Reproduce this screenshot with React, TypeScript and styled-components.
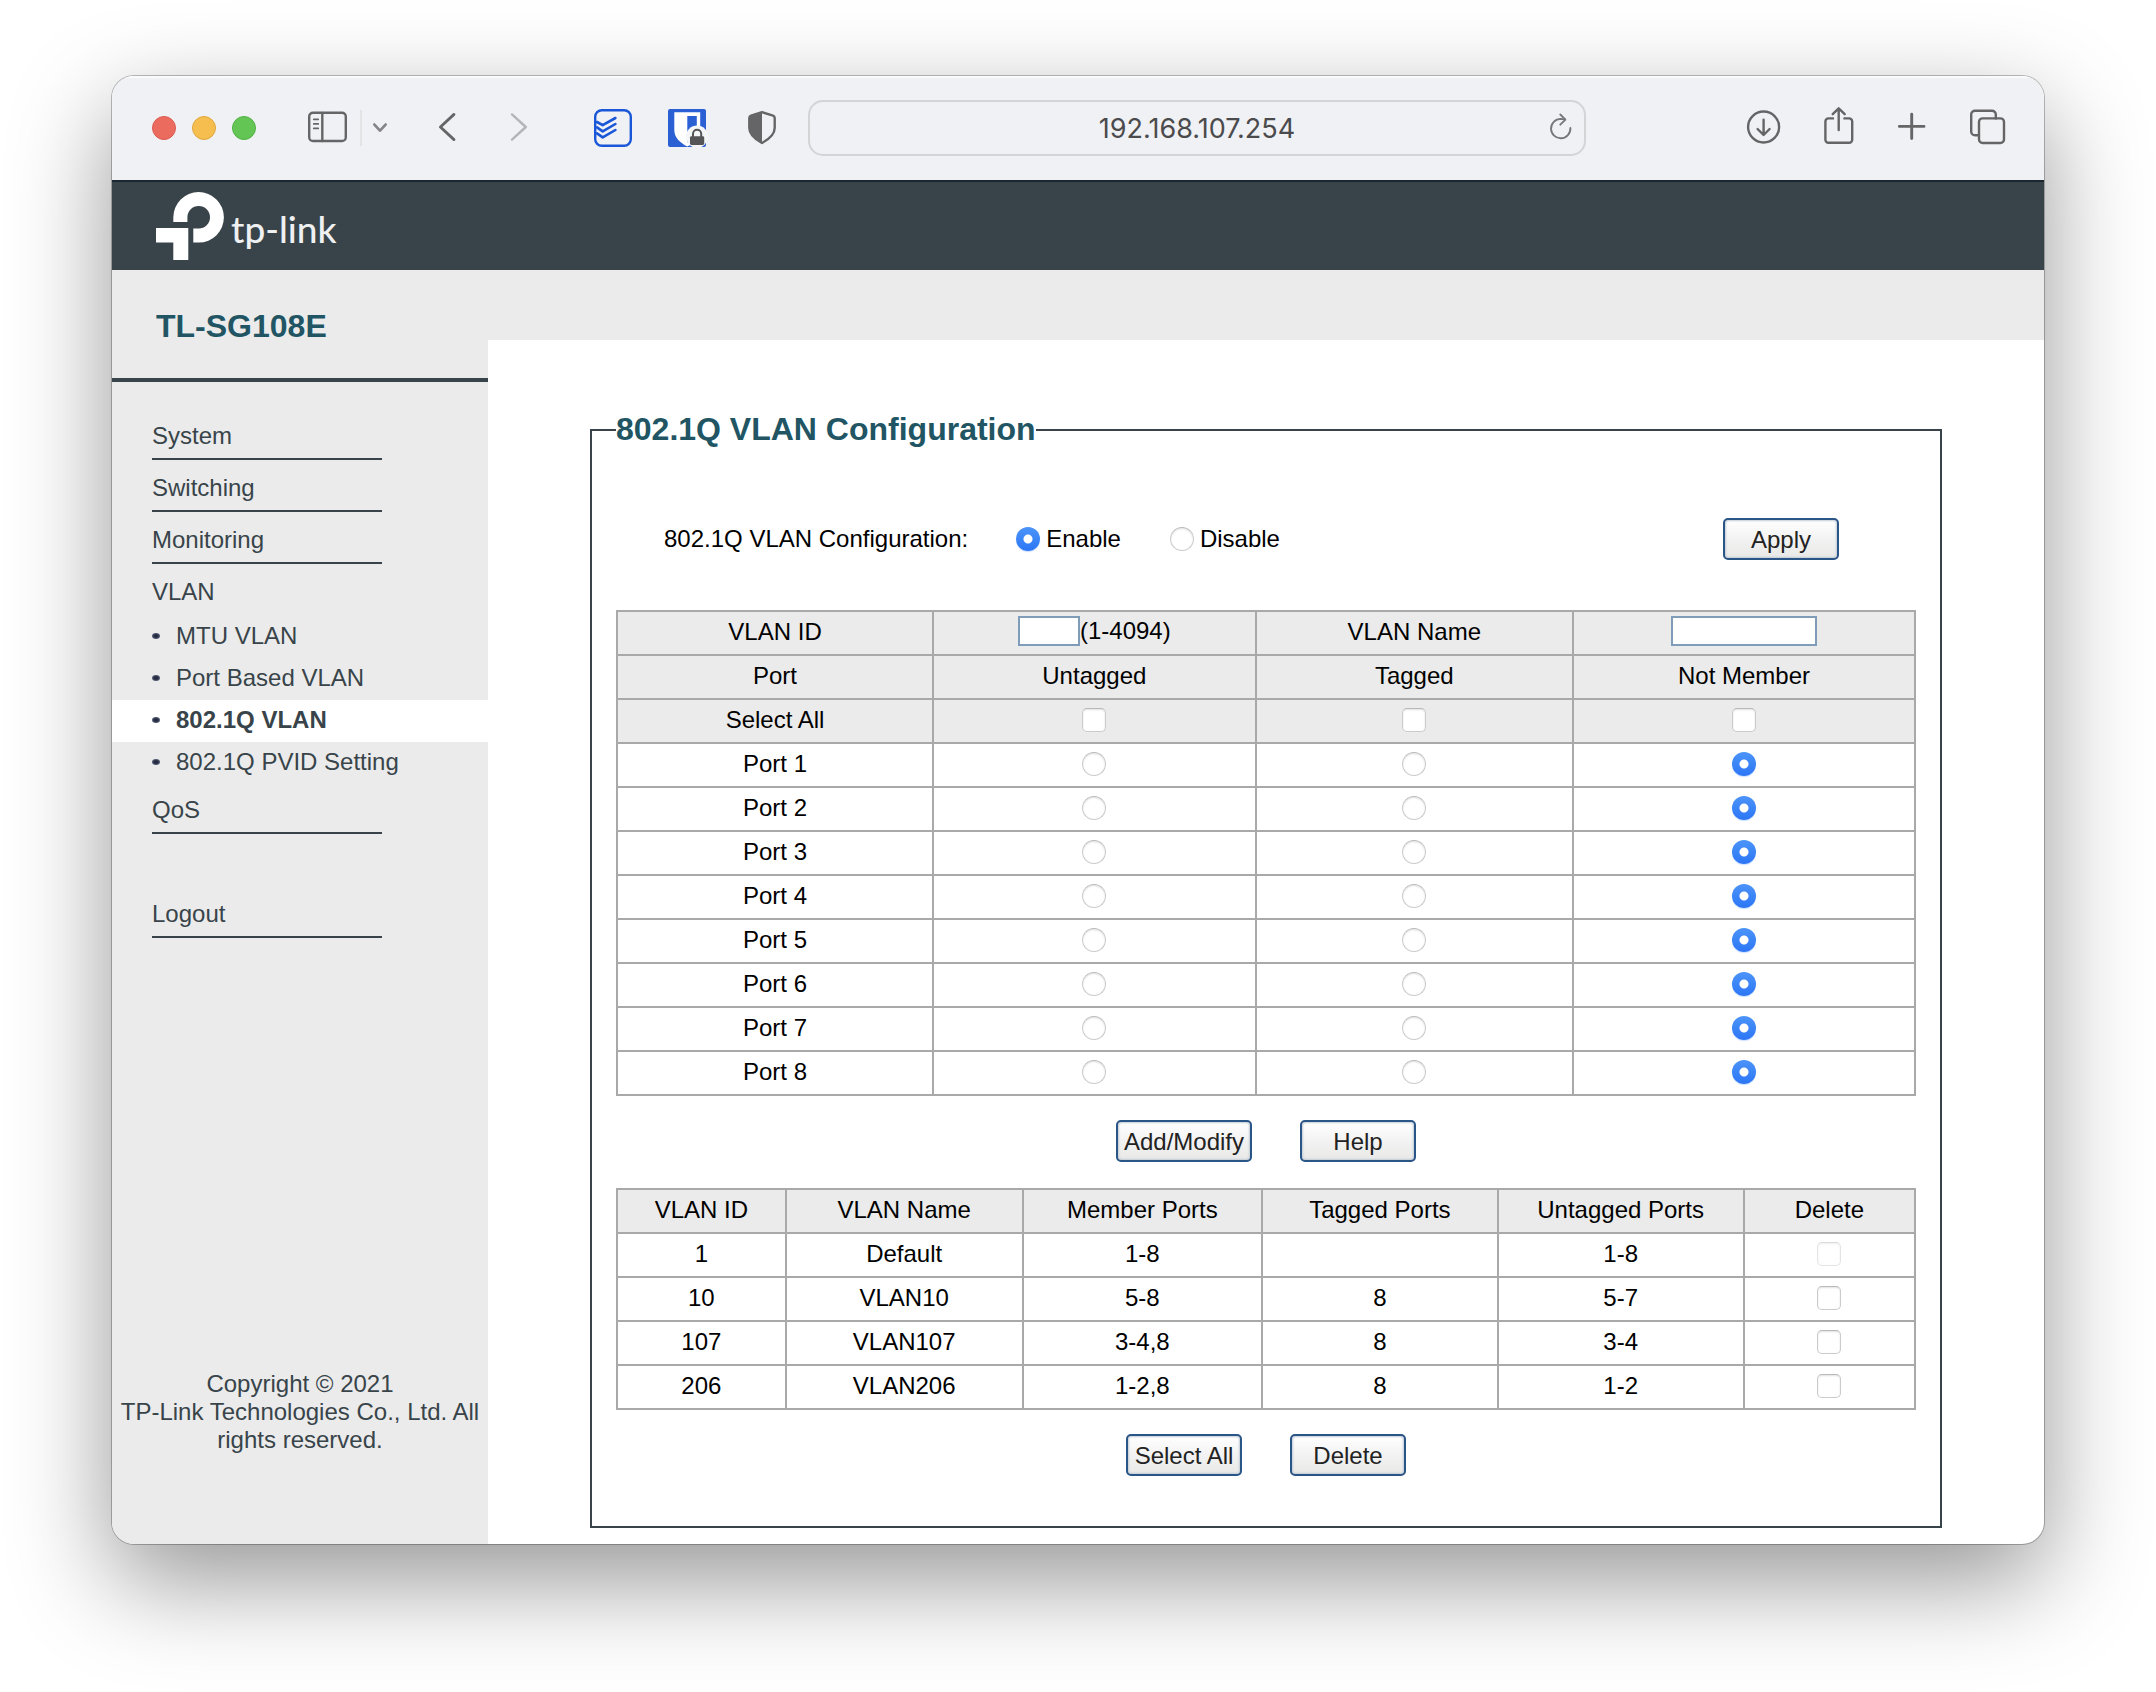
import React, { useState } from "react";
import styled, { createGlobalStyle, css } from "styled-components";

const SANS = '"Liberation Sans", Arial, Helvetica, sans-serif';
const SLATE = "#38444a";
const TEAL = "#215563";
const PALE = "#ebebeb";
const ICON = "#656567";

const GlobalStyle = createGlobalStyle`
  *, *::before, *::after { box-sizing: border-box; }
  body { margin: 0; background: #fff; font: 24px/28px ${SANS}; color: #000; }
`;

const Desktop = styled.div`
  padding: 76px 112px 148px;
`;

const BrowserWindow = styled.div`
  display: flex;
  flex-direction: column;
  border-radius: 22px;
  overflow: hidden;
  background: #fff;
  box-shadow: 0 0 0 1px rgba(0, 0, 0, 0.25), 0 36px 100px rgba(0, 0, 0, 0.42);
`;

/* ---------- browser toolbar ---------- */

const Toolbar = styled.div`
  display: flex;
  align-items: center;
  height: 104px;
  padding: 0 38px 0 40px;
  background: #f0f1f4;
  box-shadow: inset 0 2px 1px #fafbfc;
`;

const Group = styled.div<{ $gap?: number; $after?: number }>`
  display: flex;
  align-items: center;
  gap: ${(p) => p.$gap ?? 0}px;
  margin-right: ${(p) => p.$after ?? 0}px;
`;

const Light = styled.button<{ $fill: string; $edge: string }>`
  width: 24px;
  height: 24px;
  padding: 0;
  border: 1px solid ${(p) => p.$edge};
  border-radius: 50%;
  background: ${(p) => p.$fill};
`;

const IconButton = styled.button`
  display: flex;
  padding: 0;
  border: 0;
  background: none;
  svg {
    display: block;
    height: 40px;
    overflow: visible;
    fill: none;
    stroke: ${ICON};
    stroke-width: 2.4;
    stroke-linecap: round;
    stroke-linejoin: round;
  }
`;

const Separator = styled.span`
  width: 2px;
  height: 36px;
  margin: 0 10px 0 12px;
  background: #e3e4e6;
`;

const AddressBar = styled.div`
  display: flex;
  flex: 1;
  align-items: center;
  height: 56px;
  margin-right: 160px;
  padding: 0 12px 0 34px;
  border: 2px solid #d3d4d6;
  border-radius: 15px;
`;

const AddressInput = styled.input`
  flex: 1;
  min-width: 0;
  padding: 2px 0 0;
  border: 0;
  outline: 0;
  background: none;
  color: #4b4b4d;
  font: 27px/32px Inter, "Noto Sans", sans-serif;
  text-align: center;
`;

/* ---------- switch admin page ---------- */

const Banner = styled.header`
  display: flex;
  height: 90px;
  padding: 10px 44px;
  border-top: 2px solid #1b2730;
  background: ${SLATE};
`;

const Logo = styled.a`
  display: flex;
  gap: 7px;
  color: #eff0f1;
  text-decoration: none;
`;

const Wordmark = styled.span`
  padding-top: 15px;
  font: 500 37px/44px Lato, sans-serif;
`;

const Body = styled.div`
  display: flex;
`;

const Sidebar = styled.aside`
  display: flex;
  flex: none;
  flex-direction: column;
  width: 376px;
  background: ${PALE};
  color: ${SLATE};
`;

const Model = styled.h1`
  height: 112px;
  margin: 0;
  padding: 37px 44px 0;
  border-bottom: 4px solid ${SLATE};
  color: ${TEAL};
  font: bold 32px/38px ${SANS};
`;

const Menu = styled.ul`
  margin: 26px 0 0;
  padding: 0;
  list-style: none;
`;

const MenuEntry = styled.li<{ $before?: number }>`
  margin-top: ${(p) => p.$before ?? 0}px;
`;

const MenuLink = styled.a<{ $line?: boolean }>`
  display: block;
  width: 230px;
  height: 52px;
  margin-left: 40px;
  padding-top: 14px;
  border-bottom: ${(p) => (p.$line ? `2px solid ${SLATE}` : "0")};
  color: inherit;
  text-decoration: none;
`;

const SubMenu = styled.ul`
  margin: 0 0 -2px;
  padding: 0;
  list-style: none;
`;

const SubLink = styled.a<{ $active?: boolean }>`
  display: flex;
  align-items: center;
  gap: 16px;
  height: 42px;
  padding: 0 0 2px 40px;
  color: inherit;
  text-decoration: none;
  ${(p) => p.$active && css`
    background: #fff;
    font-weight: bold;
  `}
  &::before {
    content: "";
    width: 8px;
    height: 6px;
    border-radius: 50%;
    background: radial-gradient(#252c40 30%, #7f86a8 100%);
  }
`;

const Copyright = styled.p`
  margin: auto 0 0;
  padding: 0 6px 90px;
  text-align: center;
`;

const Main = styled.main`
  flex: 1;
  min-width: 0;
`;

const TopStrip = styled.div`
  height: 70px;
  background: ${PALE};
`;

const Panel = styled.fieldset`
  min-width: 0;
  margin: 72px 102px 16px;
  padding: 70px 24px 50px;
  border: 2px solid ${SLATE};
`;

const PanelTitle = styled.legend`
  padding: 0 0 2px;
  color: ${TEAL};
  font: bold 32px/34px ${SANS};
`;

const ModeRow = styled.div`
  display: flex;
  align-items: center;
  margin-bottom: 50px;
  padding: 0 77px 0 48px;
`;

const ModeCaption = styled.span`
  margin-right: 48px;
`;

const ModeOption = styled.label`
  display: flex;
  align-items: center;
  gap: 6px;
  margin-right: 49px;
`;

const tick = css`
  display: block;
  flex: none;
  width: 24px;
  height: 24px;
  margin: 0;
  appearance: none;
  border: 1px solid #cbcbcb;
  border-top-color: #b9b9b9;
  background: #fff;
  box-shadow: inset 0 1px 2px rgba(0, 0, 0, 0.12);
`;

const Radio = styled.input.attrs({ type: "radio" })`
  ${tick}
  border-radius: 50%;
  &:checked {
    border: 0;
    background: radial-gradient(circle, #fff 4px, transparent 5px), linear-gradient(#4c94f8, #2c76f6);
    box-shadow: 0 1px 1px rgba(44, 118, 246, 0.25);
  }
`;

const Check = styled.input.attrs({ type: "checkbox" })`
  ${tick}
  border-radius: 5px;
  &:checked {
    background: linear-gradient(#4c94f8, #2c76f6);
  }
  &:disabled {
    opacity: 0.5;
  }
`;

const PushButton = styled.button`
  min-width: 116px;
  height: 42px;
  padding: 2px 6px 0;
  border: 2px solid #2a5587;
  border-radius: 5px;
  background: linear-gradient(#fff, #f0f0f0 60%, #e9e9e7);
  box-shadow: inset 0 0 2px 1px #c3ccd6;
  color: #222;
  font: 24px/28px ${SANS};
`;

const ApplyButton = styled(PushButton)`
  margin-left: auto;
`;

const Actions = styled.div<{ $after?: number }>`
  display: flex;
  justify-content: center;
  gap: 48px;
  margin: 24px 0 ${(p) => p.$after ?? 0}px;
`;

const Grid = styled.table`
  width: 100%;
  table-layout: fixed;
  border-collapse: collapse;
  text-align: center;
`;

const Column = styled.col<{ $share: number }>`
  width: ${(p) => p.$share}%;
`;

const Row = styled.tr<{ $shaded?: boolean }>`
  height: 44px;
  background: ${(p) => (p.$shaded ? PALE : "#fff")};
  th, td {
    padding: 0 0 2px;
    border: 2px solid #a9a9a9;
    font-weight: normal;
    vertical-align: middle;
  }
  ${Radio}, ${Check} {
    margin: 0 auto;
  }
`;

const Field = styled.input<{ $width: number }>`
  display: block;
  width: ${(p) => p.$width}px;
  height: 30px;
  padding: 0 4px;
  border: 2px solid #7f9db9;
  background: #fff;
  font: 24px/26px ${SANS};
`;

const FieldWrap = styled.div`
  display: flex;
  align-items: center;
  justify-content: center;
  height: 30px;
  margin-bottom: 2px;
`;

/* ---------- icons ---------- */

const SidebarIcon = () => (
  <svg width="40" viewBox="0 0 40 40">
    <rect x="1.2" y="4.8" width="36.6" height="28.2" rx="3.8" />
    <path d="M14.3 5v28" />
    <path d="M5.8 11.3h4.4M5.8 15.9h4.4M5.8 20.4h4.4" strokeWidth="1.8" />
  </svg>
);

const DropIcon = () => (
  <svg width="16" viewBox="0 0 16 40" style={{ stroke: "#85858a", strokeWidth: 2.8 }}>
    <path d="M2.4 16.6L8 22.6L13.6 16.6" />
  </svg>
);

const BackIcon = () => (
  <svg width="18" viewBox="0 0 18 40">
    <path d="M16 6.4L2.4 19L16 31.6" strokeWidth="2.8" />
  </svg>
);

const ForwardIcon = () => (
  <svg width="18" viewBox="0 0 18 40" style={{ stroke: "#b4b5b8" }}>
    <path d="M2 6.4L15.8 19L2 31.6" />
  </svg>
);

const TodoistIcon = () => (
  <svg width="38" viewBox="0 0 38 40" style={{ stroke: "#1a57d8" }}>
    <rect x="1.2" y="2.2" width="35.6" height="35.6" rx="6.6" />
    <path d="M3 14L8.7 17.2L21.4 10M3 19.4L8.7 23.4L21.4 16M3 25.4L8.7 29.4L21.4 22" strokeWidth="2.6" />
  </svg>
);

const BitwardenIcon = () => (
  <svg width="38" viewBox="0 0 38 40" style={{ stroke: "none" }}>
    <rect y="1" width="38" height="38" rx="2" fill="#2b5fd4" />
    <path d="M6.3 4.2H32.2V22C32.2 30 26 35 19.3 38.6C12.5 35 6.3 30 6.3 22Z" fill="#fff" />
    <path d="M19.3 8H28.8V22C28.8 27 24 31.5 19.3 34.5Z" fill="#2b5fd4" />
    <circle cx="29" cy="28.6" r="11" fill="#f4f5f7" />
    <rect x="22" y="28.2" width="14.2" height="8.8" rx="1.4" fill="#555557" />
    <path d="M25 28.5V25.8A4.1 4.1 0 0 1 33.2 25.8V28.5" fill="none" stroke="#555557" strokeWidth="2" />
  </svg>
);

const ShieldIcon = () => (
  <svg width="28" viewBox="0 0 28 40">
    <path d="M14 4.2L25 7.6Q26.7 8.2 26.7 10V20C26.7 27 20.5 31.5 14 35C7.5 31.5 1.3 27 1.3 20V10Q1.3 8.2 3 7.6Z" />
    <path d="M14 4.2L3 7.6Q1.3 8.2 1.3 10V20C1.3 27 7.5 31.5 14 35Z" fill={ICON} stroke="none" />
  </svg>
);

const ReloadIcon = () => (
  <svg width="22" viewBox="0 0 22 40" style={{ stroke: "#78787b", strokeWidth: 1.9 }}>
    <path d="M20.4 20A9.7 9.7 0 1 1 10.7 10.9L15 11.4" />
    <path d="M10.3 6.5L15.4 11.6L10.3 16.7" />
  </svg>
);

const DownloadIcon = () => (
  <svg width="34" viewBox="0 0 34 40">
    <circle cx="17.6" cy="19" r="15.5" />
    <path d="M17.6 11.8V26.6M11.6 21L17.6 27L23.6 21" />
  </svg>
);

const ShareIcon = () => (
  <svg width="32" viewBox="0 0 32 40">
    <path d="M11 10.4H6.4A3 3 0 0 0 3.4 13.4V31.8A3 3 0 0 0 6.4 34.8H27.2A3 3 0 0 0 30.2 31.8V13.4A3 3 0 0 0 27.2 10.4H22.4" />
    <path d="M16.7 22V0.6M10.7 6.2L16.7 0.3L22.7 6.2" />
  </svg>
);

const PlusIcon = () => (
  <svg width="30" viewBox="0 0 30 40">
    <path d="M15.7 6.2V30.6M3.4 18.4H28" strokeWidth="2.9" />
  </svg>
);

const TabsIcon = () => (
  <svg width="38" viewBox="0 0 38 40">
    <rect x="11" y="10.4" width="25" height="24.6" rx="3.6" />
    <path d="M11 27.2H7A3.8 3.8 0 0 1 3.2 23.4V6.6A3.8 3.8 0 0 1 7 2.8H24A3.8 3.8 0 0 1 27.8 6.6V10.4" />
  </svg>
);

const LogoMark = () => (
  <svg width="68" height="68" viewBox="0 0 68 68" fill="#fff">
    <path d="M17.3 30V25.3A25.3 25.3 0 1 1 42.7 50.6H37.3V36.6H42.7A11.3 11.3 0 1 0 31.4 25.3V30Z" />
    <path d="M0 36H32.3V68H17.3V50.6H0Z" />
  </svg>
);

/* ---------- data ---------- */

const PORTS = [1, 2, 3, 4, 5, 6, 7, 8];
const MEMBERSHIPS = ["Untagged", "Tagged", "Not Member"];
const VLANS = [
  { id: "1", name: "Default", members: "1-8", tagged: "", untagged: "1-8", locked: true },
  { id: "10", name: "VLAN10", members: "5-8", tagged: "8", untagged: "5-7", locked: false },
  { id: "107", name: "VLAN107", members: "3-4,8", tagged: "8", untagged: "3-4", locked: false },
  { id: "206", name: "VLAN206", members: "1-2,8", tagged: "8", untagged: "1-2", locked: false },
];
const VLAN_PAGES = ["MTU VLAN", "Port Based VLAN", "802.1Q VLAN", "802.1Q PVID Setting"];

const BrowserToolbar = () => (
  <Toolbar>
    <Group $gap={16} $after={52}>
      <Light aria-label="Close" $fill="#ec6b5f" $edge="#dc5b50" />
      <Light aria-label="Minimize" $fill="#f5be4f" $edge="#dfa840" />
      <Light aria-label="Zoom" $fill="#62c554" $edge="#53b146" />
    </Group>
    <Group $after={50}>
      <IconButton aria-label="Show sidebar"><SidebarIcon /></IconButton>
      <Separator />
      <IconButton aria-label="Tab groups"><DropIcon /></IconButton>
    </Group>
    <Group $gap={54} $after={66}>
      <IconButton aria-label="Back"><BackIcon /></IconButton>
      <IconButton aria-label="Forward"><ForwardIcon /></IconButton>
    </Group>
    <Group $gap={36} $after={42}>
      <IconButton aria-label="Todoist"><TodoistIcon /></IconButton>
      <IconButton aria-label="Bitwarden"><BitwardenIcon /></IconButton>
    </Group>
    <Group $after={32}>
      <IconButton aria-label="Privacy report"><ShieldIcon /></IconButton>
    </Group>
    <AddressBar>
      <AddressInput aria-label="Address" defaultValue="192.168.107.254" />
      <IconButton aria-label="Reload"><ReloadIcon /></IconButton>
    </AddressBar>
    <Group $gap={42}>
      <IconButton aria-label="Downloads"><DownloadIcon /></IconButton>
      <IconButton aria-label="Share"><ShareIcon /></IconButton>
      <IconButton aria-label="New tab"><PlusIcon /></IconButton>
      <IconButton aria-label="Tab overview"><TabsIcon /></IconButton>
    </Group>
  </Toolbar>
);

const Navigation = () => (
  <Sidebar>
    <Model>TL-SG108E</Model>
    <nav>
      <Menu>
        {["System", "Switching", "Monitoring"].map((name) => (
          <MenuEntry key={name}><MenuLink href="#" $line>{name}</MenuLink></MenuEntry>
        ))}
        <MenuEntry>
          <MenuLink href="#">VLAN</MenuLink>
          <SubMenu>
            {VLAN_PAGES.map((name) => (
              <li key={name}><SubLink href="#" $active={name === "802.1Q VLAN"}>{name}</SubLink></li>
            ))}
          </SubMenu>
        </MenuEntry>
        <MenuEntry><MenuLink href="#" $line>QoS</MenuLink></MenuEntry>
        <MenuEntry $before={52}><MenuLink href="#" $line>Logout</MenuLink></MenuEntry>
      </Menu>
    </nav>
    <Copyright>
      Copyright © 2021<br />TP-Link Technologies Co., Ltd. All rights reserved.
    </Copyright>
  </Sidebar>
);

const PortTable = () => {
  const [choice, setChoice] = useState<Record<number, string>>({});
  return (
    <Grid>
      <colgroup>
        <Column $share={24.35} />
        <Column $share={24.85} />
        <Column $share={24.45} />
        <Column $share={26.35} />
      </colgroup>
      <tbody>
        <Row $shaded>
          <th><label htmlFor="vlan-id">VLAN ID</label></th>
          <td><FieldWrap><Field id="vlan-id" $width={62} />(1-4094)</FieldWrap></td>
          <th><label htmlFor="vlan-name">VLAN Name</label></th>
          <td><FieldWrap><Field id="vlan-name" $width={146} /></FieldWrap></td>
        </Row>
        <Row $shaded>
          <th>Port</th>
          {MEMBERSHIPS.map((m) => <th key={m}>{m}</th>)}
        </Row>
        <Row $shaded>
          <th>Select All</th>
          {MEMBERSHIPS.map((m) => <td key={m}><Check aria-label={`Select all ${m}`} /></td>)}
        </Row>
        {PORTS.map((port) => (
          <Row key={port}>
            <th>Port {port}</th>
            {MEMBERSHIPS.map((m) => (
              <td key={m}>
                <Radio
                  name={`port-${port}`}
                  aria-label={`Port ${port} ${m}`}
                  checked={(choice[port] ?? "Not Member") === m}
                  onChange={() => setChoice({ ...choice, [port]: m })}
                />
              </td>
            ))}
          </Row>
        ))}
      </tbody>
    </Grid>
  );
};

const VlanTable = () => (
  <Grid>
    <colgroup>
      <Column $share={13} />
      <Column $share={18.25} />
      <Column $share={18.45} />
      <Column $share={18.15} />
      <Column $share={18.95} />
      <Column $share={13.2} />
    </colgroup>
    <thead>
      <Row $shaded>
        <th>VLAN ID</th>
        <th>VLAN Name</th>
        <th>Member Ports</th>
        <th>Tagged Ports</th>
        <th>Untagged Ports</th>
        <th>Delete</th>
      </Row>
    </thead>
    <tbody>
      {VLANS.map((v) => (
        <Row key={v.id}>
          <td>{v.id}</td>
          <td>{v.name}</td>
          <td>{v.members}</td>
          <td>{v.tagged}</td>
          <td>{v.untagged}</td>
          <td><Check aria-label={`Delete ${v.name}`} disabled={v.locked} /></td>
        </Row>
      ))}
    </tbody>
  </Grid>
);

export default function App() {
  return (
    <Desktop>
      <GlobalStyle />
      <BrowserWindow>
        <BrowserToolbar />
        <Banner>
          <Logo href="#">
            <LogoMark />
            <Wordmark>tp-link</Wordmark>
          </Logo>
        </Banner>
        <Body>
          <Navigation />
          <Main>
            <TopStrip />
            <Panel>
              <PanelTitle>802.1Q VLAN Configuration</PanelTitle>
              <ModeRow>
                <ModeCaption>802.1Q VLAN Configuration:</ModeCaption>
                <ModeOption><Radio name="mode" defaultChecked />Enable</ModeOption>
                <ModeOption><Radio name="mode" />Disable</ModeOption>
                <ApplyButton>Apply</ApplyButton>
              </ModeRow>
              <PortTable />
              <Actions $after={26}>
                <PushButton>Add/Modify</PushButton>
                <PushButton>Help</PushButton>
              </Actions>
              <VlanTable />
              <Actions>
                <PushButton>Select All</PushButton>
                <PushButton>Delete</PushButton>
              </Actions>
            </Panel>
          </Main>
        </Body>
      </BrowserWindow>
    </Desktop>
  );
}
